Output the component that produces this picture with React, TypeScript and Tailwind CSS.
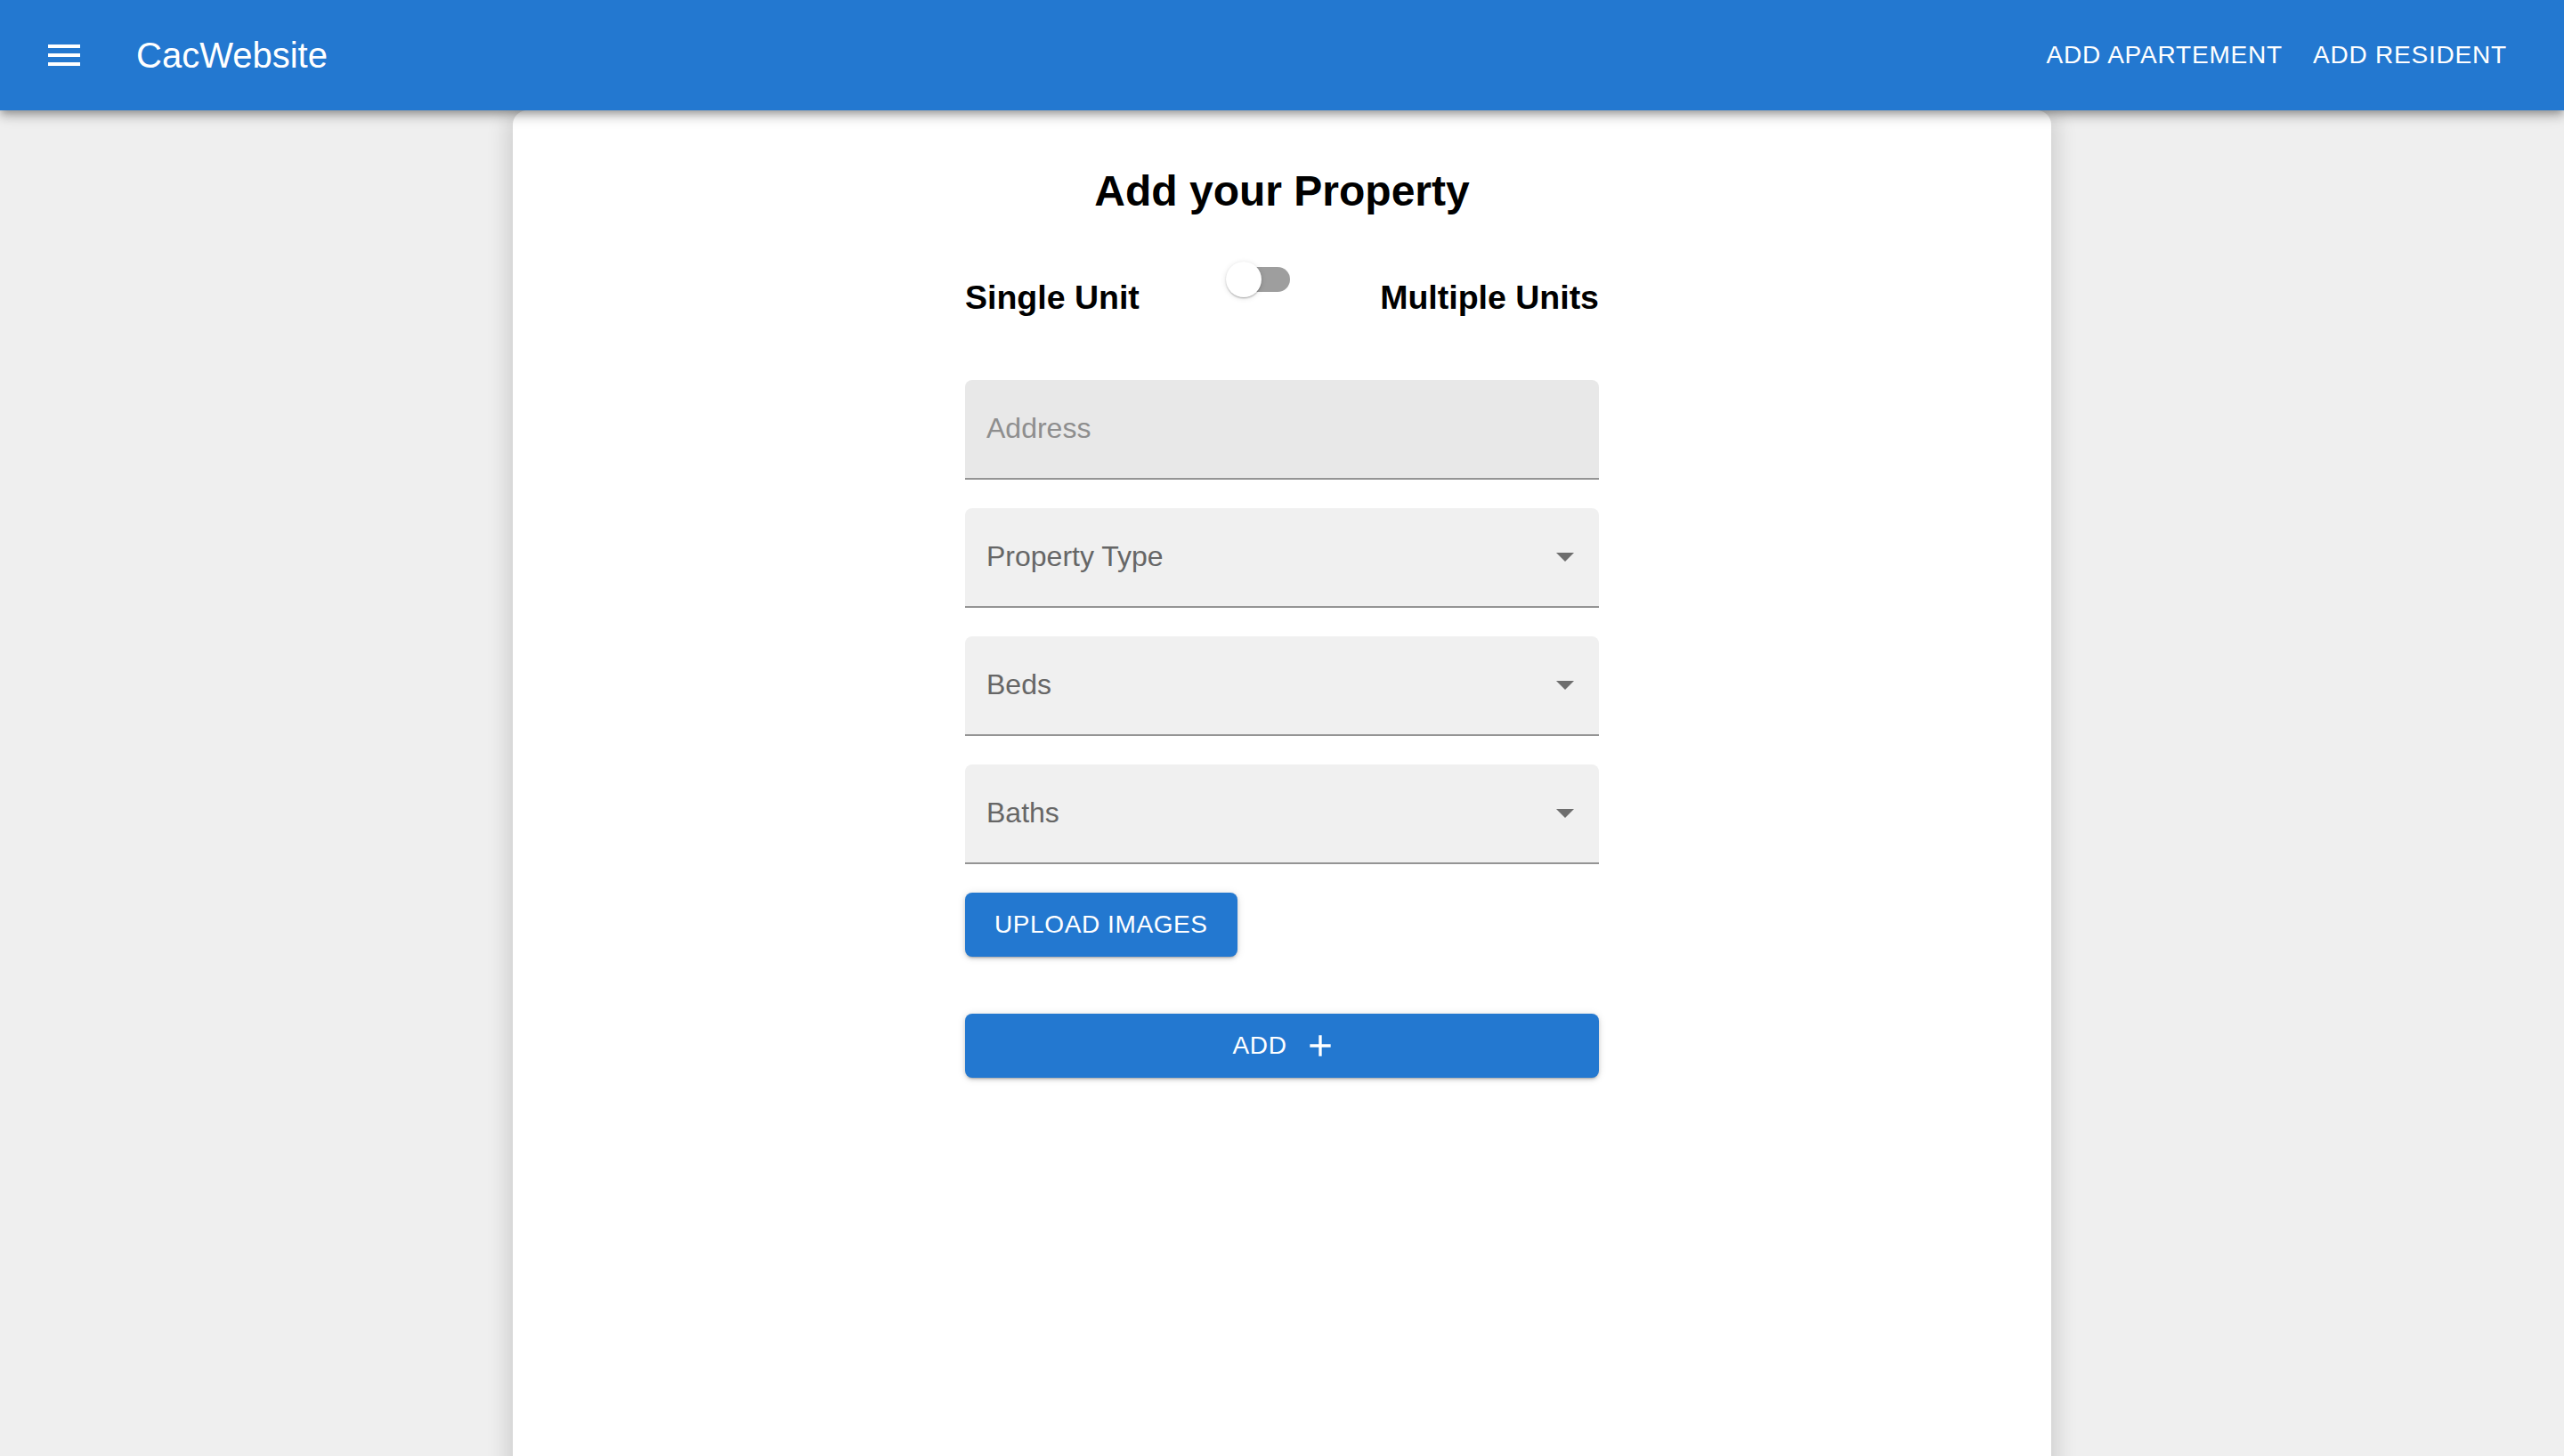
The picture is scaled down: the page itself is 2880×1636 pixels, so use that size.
import React from "react";

function MenuIcon() {
  return (
    <svg width="48" height="48" viewBox="0 0 24 24" fill="#ffffff" aria-hidden="true">
      <path d="M3 18h18v-2H3v2zm0-5h18v-2H3v2zm0-7v2h18V6H3z" />
    </svg>
  );
}

function ArrowDrop() {
  return (
    <svg width="48" height="48" viewBox="0 0 24 24" fill="rgba(0,0,0,0.54)" aria-hidden="true">
      <path d="M7 10l5 5 5-5z" />
    </svg>
  );
}

function PlusIcon() {
  return (
    <svg width="40" height="40" viewBox="0 0 24 24" fill="#ffffff" aria-hidden="true">
      <path d="M19 13h-6v6h-2v-6H5v-2h6V5h2v6h6v2z" />
    </svg>
  );
}

function Field({ label, select, light }: { label: string; select?: boolean; light?: boolean }) {
  return (
    <div
      className={`relative h-[112px] w-full rounded-t-[8px] border-b-2 border-[#949494] ${
        light ? "bg-[#e8e8e8]" : "bg-[#f0f0f0]"
      }`}
    >
      <div
        className={`absolute left-[24px] top-[31px] text-[32px] leading-[46px] ${
          light ? "text-[#8e8e8e]" : "text-[#666666]"
        }`}
      >
        {label}
      </div>
      {select && (
        <div className="absolute right-[14px] top-[30px]">
          <ArrowDrop />
        </div>
      )}
    </div>
  );
}

export default function App() {
  return (
    <div
      className="min-h-[1636px] bg-[#efefef]"
      style={{ fontFamily: '"Liberation Sans", Arial, Helvetica, sans-serif' }}
    >
      <header className="relative z-10 flex h-[124px] items-center bg-[#2378d0] pl-[24px] pr-[48px] shadow-[0_4px_8px_-2px_rgba(0,0,0,0.25),0_8px_10px_0_rgba(0,0,0,0.14),0_2px_20px_0_rgba(0,0,0,0.12)]">
        <div className="flex h-[96px] w-[96px] items-center justify-center">
          <MenuIcon />
        </div>
        <div className="ml-[33px] text-[40px] leading-[60px] text-white">CacWebsite</div>
        <nav className="ml-auto flex items-center gap-[2px]">
          <button className="px-[16px] text-[28px] leading-[48px] tracking-[0.8px] text-white">
            ADD APARTEMENT
          </button>
          <button className="px-[16px] text-[28px] leading-[48px] tracking-[0.8px] text-white">
            ADD RESIDENT
          </button>
        </nav>
      </header>

      <main className="flex justify-center">
        <section className="min-h-[1560px] w-[1728px] rounded-[16px] bg-white shadow-[0_6px_24px_6px_rgba(0,0,0,0.14)]">
          <div className="mx-auto flex w-[712px] flex-col">
            <h1 className="mt-[59px] text-center text-[48px] font-bold leading-[64px] text-black">
              Add your Property
            </h1>

            <div className="mt-[29px] flex items-start justify-between">
              <span className="mt-[36px] text-[37.5px] font-bold leading-[44px] text-black">
                Single Unit
              </span>
              <div className="relative h-[76px] w-[116px]">
                <div className="absolute left-[24px] top-[24px] h-[28px] w-[68px] rounded-full bg-[#9e9e9e]" />
                <div className="absolute left-[20px] top-[18px] h-[40px] w-[40px] rounded-full bg-white shadow-[0_2px_2px_-1px_rgba(0,0,0,0.2),0_1px_2px_0_rgba(0,0,0,0.14),0_1px_6px_0_rgba(0,0,0,0.12)]" />
              </div>
              <span className="mt-[36px] text-[37.5px] font-bold leading-[44px] text-black">
                Multiple Units
              </span>
            </div>

            <div className="mt-[71px] flex flex-col gap-[32px]">
              <Field label="Address" light />
              <Field label="Property Type" select />
              <Field label="Beds" select />
              <Field label="Baths" select />
            </div>

            <div className="mt-[32px] flex">
              <button className="flex h-[72px] items-center rounded-[8px] bg-[#2378d0] px-[33px] text-[28px] tracking-[0.6px] text-white shadow-[0_3px_2px_-2px_rgba(0,0,0,0.2),0_2px_4px_0_rgba(0,0,0,0.14),0_1px_10px_0_rgba(0,0,0,0.12)]">
                UPLOAD IMAGES
              </button>
            </div>

            <button className="mt-[64px] flex h-[72px] w-full items-center justify-center rounded-[8px] bg-[#2378d0] text-[28px] tracking-[0.6px] text-white shadow-[0_3px_2px_-2px_rgba(0,0,0,0.2),0_2px_4px_0_rgba(0,0,0,0.14),0_1px_10px_0_rgba(0,0,0,0.12)]">
              <span>ADD</span>
              <span className="ml-[18px] -mr-[8px] flex">
                <PlusIcon />
              </span>
            </button>
          </div>
        </section>
      </main>
    </div>
  );
}
